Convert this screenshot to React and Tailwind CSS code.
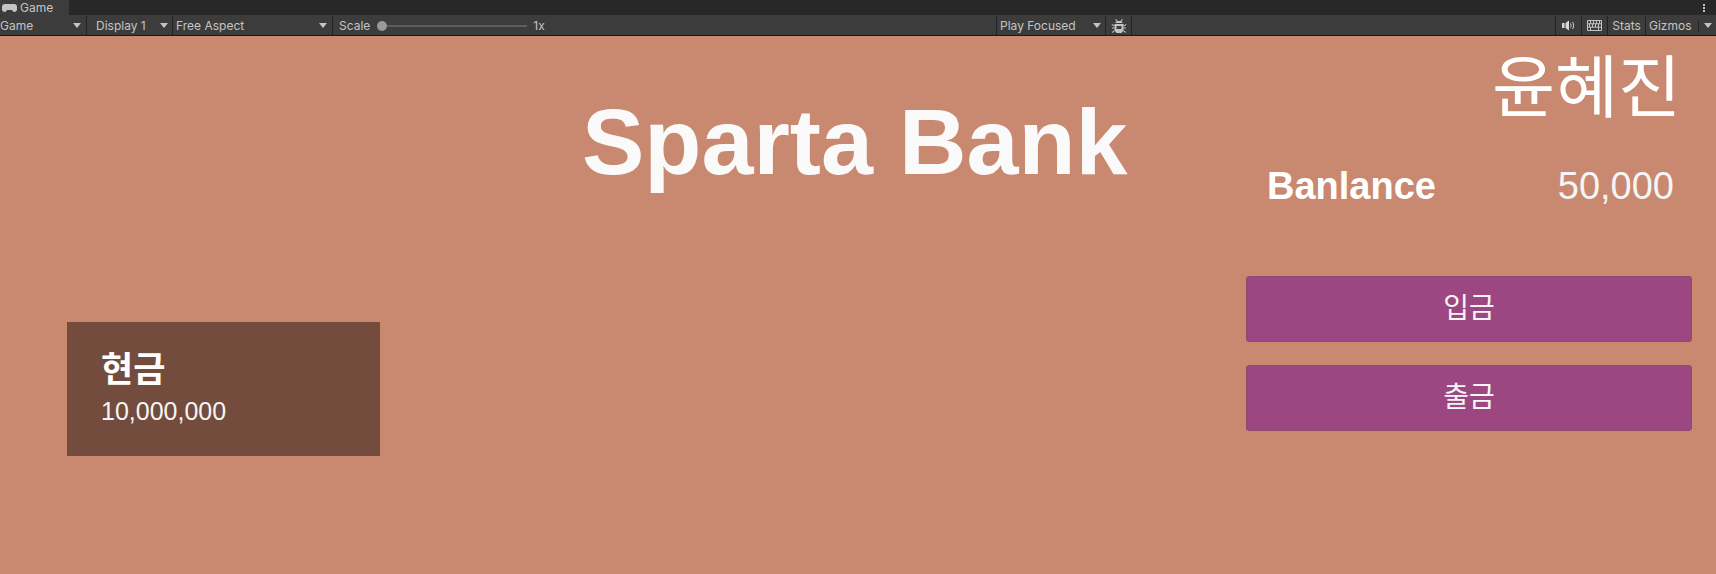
const sans = "font-['Liberation_Sans','Noto_Sans_CJK_KR',sans-serif]"
const ui = "font-['Inter','Noto_Sans',sans-serif]"

function Arrow() {
  return <span className="h-0 w-0 border-x-[4px] border-t-[5px] border-x-transparent border-t-[#c4c4c4]" />
}

function Dropdown({ label, className }) {
  return (
    <div className={`flex h-full shrink-0 items-center justify-between border-r border-[#232323] ${className}`}>
      <span>{label}</span>
      <Arrow />
    </div>
  )
}

function BugIcon() {
  return (
    <svg width="16" height="16" viewBox="0 0 16 16" fill="#c4c4c4">
      <path d="M5 1l1.500 2h3L11 1l.8.5L10.500 3.500 12 5H4l1.500-1.500L4.200 1.500z" />
      <path fillRule="evenodd" d="M3.500 6h9v6.500L10.500 15h-5l-2-2.500zM5.500 8v3h5V8z" />
      <path d="M1 6l2.500 1.500v1L.6 7zM15 6l-2.500 1.500v1L15.400 7zM1 9.500h2.500v1H1zM12.500 9.500H15v1h-2.500zM1 14l2.500-2v1.200L1.600 15zM15 14l-2.500-2v1.200l1.900 1.800z" />
    </svg>
  )
}

function SpeakerIcon() {
  return (
    <svg width="13" height="11" viewBox="0 0 13 11" fill="#d8d8d8">
      <path d="M0 3h2.500v5H0zM3.500 3L7 .5v10L3.500 8z" />
      <path d="M8.500 3.500c.8 1 .8 3 0 4" fill="none" stroke="#d8d8d8" strokeWidth="1" />
      <path d="M10.500 2c1.500 2 1.500 5 0 7" fill="none" stroke="#d8d8d8" strokeWidth="1" />
    </svg>
  )
}

function KeyboardIcon() {
  return (
    <svg width="15" height="11" viewBox="0 0 15 11" fill="none" stroke="#c4c4c4" strokeWidth="1">
      <path d="M.5.500h14v10H.5zM.5 3.800h14M.5 7.200h14M3.500.5v3.300M6.500.5v3.300M9.500.5v3.300M12.500.5v3.300M2.500 3.800v3.400M5.500 3.800v3.400M8.500 3.800v3.400M11.500 3.800v3.400M3.500 7.200v3.300M11.500 7.200v3.300" />
    </svg>
  )
}

function Toolbar() {
  return (
    <div className={`flex h-[21px] shrink-0 items-center border-b border-[#191919] bg-[#3c3c3c] pt-px text-[12px] leading-none text-[#c4c4c4] ${ui}`}>
      <Dropdown label="Game" className="w-[87px] pr-[5px]" />
      <Dropdown label="Display 1" className="w-[86px] pl-[9px] pr-[4px]" />
      <Dropdown label="Free Aspect" className="w-[160px] pl-[3px] pr-[5px]" />
      <div className="flex h-full flex-1 items-center pl-[6px]">
        <span>Scale</span>
        <span className="relative ml-[7px] flex h-full w-[150px] items-center">
          <span className="h-[2px] w-full bg-[#5e5e5e]" />
          <span className="absolute left-0 h-[10px] w-[10px] rounded-full bg-[#999999]" />
        </span>
        <span className="ml-[6px]">1x</span>
      </div>
      <div className="flex h-full w-[110px] shrink-0 items-center justify-between border-x border-[#232323] pl-[3px] pr-[4px]">
        <span>Play Focused</span>
        <Arrow />
      </div>
      <div className="flex h-full w-[26px] shrink-0 items-center justify-center border-r border-[#232323]">
        <BugIcon />
      </div>
      <div className="flex h-full w-[584px] shrink-0 items-center justify-end">
        <div className="flex h-full w-[27px] items-center justify-center border-x border-[#232323]">
          <SpeakerIcon />
        </div>
        <div className="flex h-full w-[26px] items-center justify-center border-r border-[#232323]">
          <KeyboardIcon />
        </div>
        <div className="flex h-full w-[38px] items-center justify-center border-r border-[#232323]">Stats</div>
        <div className="flex h-full w-[52px] items-center pl-[3px]">
          <span>Gizmos</span>
        </div>
        <div className="h-[12px] w-px bg-[#232323]" />
        <div className="flex h-full w-[17px] items-center justify-center">
          <Arrow />
        </div>
      </div>
    </div>
  )
}

function MenuButton({ label }) {
  return (
    <button className="flex h-[66px] w-full items-center justify-center rounded-[3px] border border-[#8f4a6c] bg-[#9c4781] text-[28px] leading-none text-[#f5f5f5]">
      {label}
    </button>
  )
}

export default function App() {
  return (
    <div className="flex h-[574px] w-[1716px] flex-col overflow-hidden bg-[#c98870]">
      <div className="flex h-[15px] shrink-0 bg-[#282828]">
        <div className={`flex w-[69px] items-center gap-[3px] bg-[#3c3c3c] pl-[2px] text-[12px] leading-none text-[#c4c4c4] ${ui}`}>
          <svg width="15" height="8" viewBox="0 0 15 8" fill="#c4c4c4">
            <path d="M3 0h9a3 3 0 0 1 3 3v2.500A2.500 2.500 0 0 1 10.600 7L10 6H5l-.6 1A2.500 2.500 0 0 1 0 5.500V3a3 3 0 0 1 3-3z" />
          </svg>
          <span>Game</span>
        </div>
        <div className="ml-auto mr-[11px] flex flex-col justify-center gap-px">
          <span className="h-[2px] w-[2px] bg-[#c4c4c4]" />
          <span className="h-[2px] w-[2px] bg-[#c4c4c4]" />
          <span className="h-[2px] w-[2px] bg-[#c4c4c4]" />
        </div>
      </div>
      <Toolbar />
      <div className={`flex flex-1 text-white ${sans}`}>
        <div className="ml-[67px] mt-[286px] flex h-[134px] w-[313px] shrink-0 flex-col bg-[#734c3d] pl-[34px] pt-[28px]">
          <span className="text-[35px] font-bold leading-[40px]">현금</span>
          <span className="mt-[6px] text-[25px] leading-[30px] text-[#f5f5f5]">10,000,000</span>
        </div>
        <h1 className="ml-[202px] mt-[46px] shrink-0 text-[93.5px] font-bold leading-[120px] text-[#fafafa]">Sparta Bank</h1>
        <div className="ml-auto mr-[24px] flex w-[446px] shrink-0 flex-col">
          <div className="mr-[11px] mt-[10px] text-right text-[68.5px] leading-[86px]">윤혜진</div>
          <div className="mt-[31px] flex items-center justify-between pl-[21px] pr-[18px] leading-[46px]">
            <span className="text-[38px] font-bold">Banlance</span>
            <span className="text-[38px] text-[#f5f5f5]">50,000</span>
          </div>
          <div className="mt-[67px] flex flex-col gap-[23px]">
            <MenuButton label="입금" />
            <MenuButton label="출금" />
          </div>
        </div>
      </div>
    </div>
  )
}
